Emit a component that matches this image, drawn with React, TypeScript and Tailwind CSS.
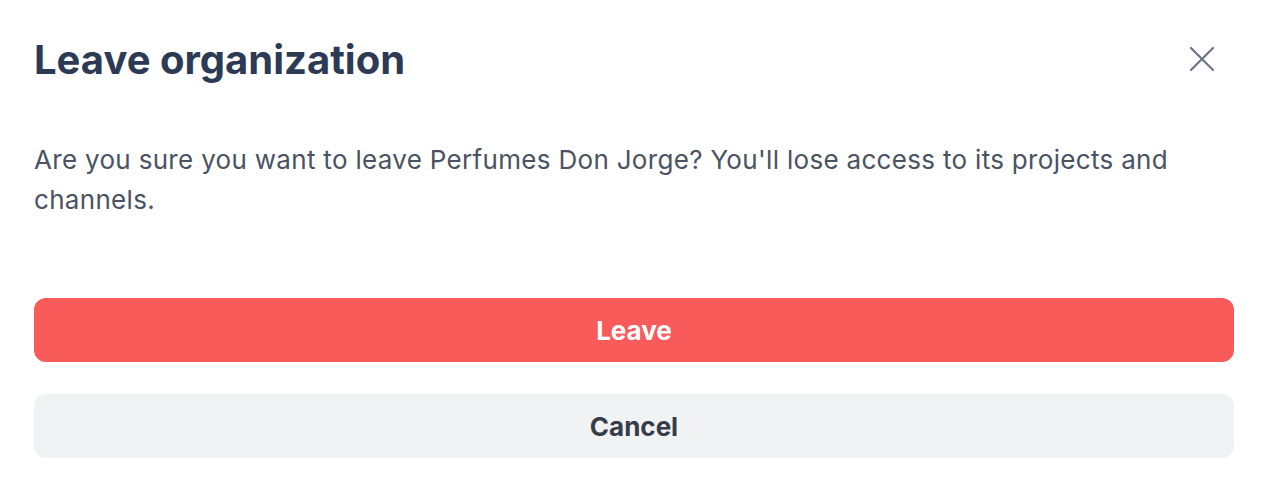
import React from 'react';

const CloseIcon: React.FC = () => (
  <svg width="26" height="26" viewBox="0 0 26 26" fill="none" stroke="currentColor" strokeWidth="2.2" strokeLinecap="round">
    <path d="M2 2 24 24M24 2 2 24" />
  </svg>
);

export const LeaveOrganizationDialog: React.FC = () => {
  return (
    <div
      className="w-[1274px] h-[490px] bg-white pl-[34px] pr-[40px] pt-[34px]"
      style={{ fontFamily: 'Inter, "Noto Sans", sans-serif' }}
    >
      <div className="flex items-start justify-between">
        <h2 className="text-[40px] leading-[52px] font-bold text-[#2d3a55]">Leave organization</h2>
        <button className="mt-[12px] mr-[19px] text-[#6b7385]">
          <CloseIcon />
        </button>
      </div>
      <p className="mt-[54px] text-[26px] leading-[40px] tracking-[0.012em] text-[#4b5262]">
        Are you sure you want to leave Perfumes Don Jorge? You'll lose access to its projects and channels.
      </p>
      <div className="mt-[78px] flex flex-col gap-[32px]">
        <button className="h-[64px] w-full rounded-[12px] bg-[#f95a5a] text-[26px] font-bold text-white">
          Leave
        </button>
        <button className="h-[64px] w-full rounded-[12px] bg-[#f1f2f4] text-[26px] font-bold text-[#353c4a]">
          Cancel
        </button>
      </div>
    </div>
  );
};

export default function App() {
  return <LeaveOrganizationDialog />;
}
